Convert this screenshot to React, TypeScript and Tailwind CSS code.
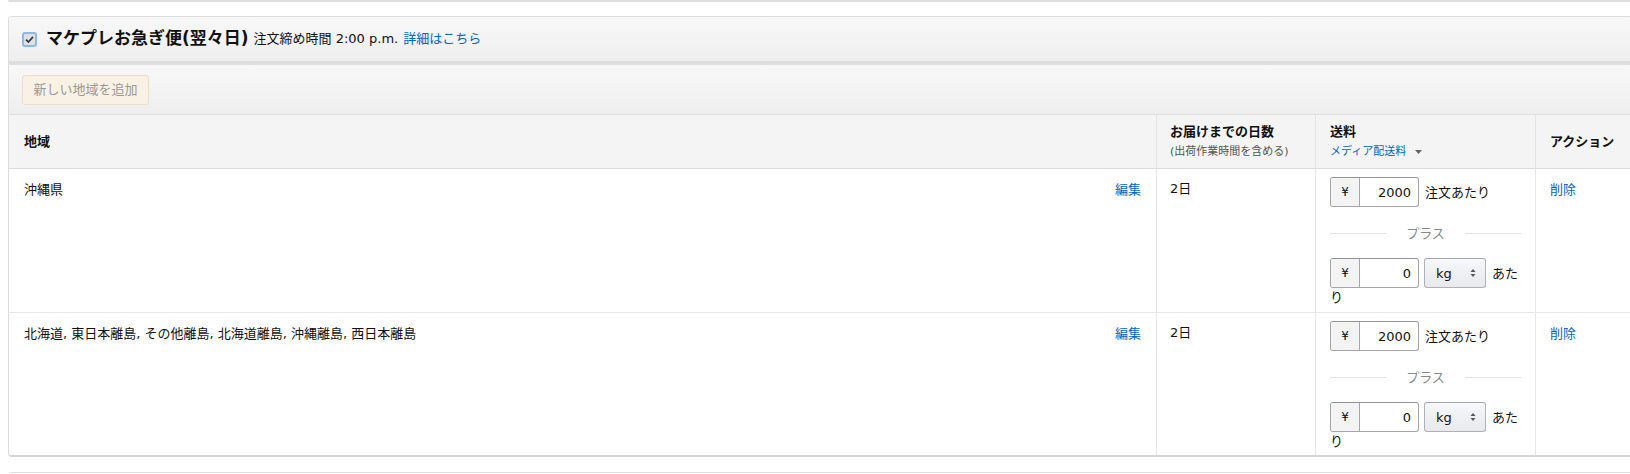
import React from "react";

const FONT = { fontFamily: '"DejaVu Sans", "Noto Sans CJK JP", sans-serif' };

function Checkbox() {
  return (
    <span className="inline-flex items-center justify-center w-[15px] h-[15px] rounded-[3px] border-2 border-[#8cb6ec] bg-[#dfe3e8]">
      <svg width="9" height="9" viewBox="0 0 9 9">
        <path d="M1 4.6 L3.4 7 L8 1.8" fill="none" stroke="#3a3a3a" strokeWidth="1.8" />
      </svg>
    </span>
  );
}

function YenInput({ value }: { value: string }) {
  return (
    <span className="inline-flex align-middle h-[30px] w-[89px] border border-[#a6a6a6] border-t-[#949494] rounded-[3px] overflow-hidden bg-white">
      <span className="w-[29px] flex items-center justify-center bg-[#f3f3f3] border-r border-[#a6a6a6] text-[12px] text-[#111]">¥</span>
      <span className="flex-1 flex items-center justify-end pr-[7px] text-[13px] text-[#111]">{value}</span>
    </span>
  );
}

function UnitSelect() {
  return (
    <span className="inline-flex align-middle items-center justify-between ml-[5px] h-[30px] w-[62px] pl-[11px] pr-[9px] border border-[#adb1b8] border-t-[#a2a6ac] rounded-[3px] bg-gradient-to-b from-[#f7f8fa] to-[#e7e9ec] text-[13px] text-[#111]">
      <span>kg</span>
      <svg width="6" height="10" viewBox="0 0 6 10">
        <path d="M3 1 L5.5 4 L0.5 4 Z" fill="#555" />
        <path d="M3 9 L5.5 6 L0.5 6 Z" fill="#555" />
      </svg>
    </span>
  );
}

function FeeCell() {
  return (
    <div className="w-[191px] text-[13px] leading-[19px] text-[#111]">
      <div>
        <YenInput value="2000" />
        <span className="ml-[6px] align-middle">注文あたり</span>
      </div>
      <div className="flex items-center mt-[17px] mb-[15px] h-[19px]">
        <div className="flex-1 h-px bg-[#e3e3e3]" />
        <span className="px-[20px] text-[#888]">プラス</span>
        <div className="flex-1 h-px bg-[#e3e3e3]" />
      </div>
      <div>
        <YenInput value="0" />
        <UnitSelect />
        <span className="ml-[6px] align-middle">あた</span>
      </div>
      <div>り</div>
    </div>
  );
}

function Row({ region, h }: { region: string; h: string }) {
  return (
    <div className={`grid grid-cols-[1147px_159px_220px_1fr] ${h} border-b border-[#e7e7e7] last:border-b-0 text-[13px] leading-[19px] text-[#111]`}>
      <div className="flex justify-between pl-[15px] pr-[15px] pt-[11px]">
        <span>{region}</span>
        <span className="text-[#0066c0]">編集</span>
      </div>
      <div className="border-l border-[#e7e7e7] pl-[13px] pt-[10px]">2日</div>
      <div className="border-l border-[#e7e7e7] pl-[14px] pt-[8px]">
        <FeeCell />
      </div>
      <div className="border-l border-[#e7e7e7] pl-[14px] pt-[11px] text-[#0066c0]">削除</div>
    </div>
  );
}

export default function App() {
  return (
    <div className="w-[1630px] h-[474px] overflow-hidden bg-white" style={FONT}>
      <div className="ml-[8px] w-[1640px] h-[2px] border-b-2 border-[#dedede] rounded-b-[3px]" />
      <div className="mt-[14px] ml-[8px] w-[1640px] border border-[#dcdcdc] border-b-2 border-b-[#d6d6d6] rounded-[4px] overflow-hidden">
        <div className="h-[44px] flex items-center pl-[13px] bg-gradient-to-b from-[#f8f8f8] to-[#eeeeee]">
          <Checkbox />
          <span className="ml-[9px] text-[17px] font-bold text-[#111]">マケプレお急ぎ便(翌々日)</span>
          <span className="ml-[5px] text-[13px] text-[#111]">注文締め時間 2:00 p.m.</span>
          <span className="ml-[5px] text-[13px] text-[#0066c0]">詳細はこちら</span>
        </div>
        <div className="h-[4px] bg-[#dddddd]" />
        <div className="h-[50px] flex items-center pl-[13px] border-b border-[#dddddd] bg-gradient-to-b from-[#f8f8f8] to-[#eeeeee]">
          <span className="h-[30px] w-[127px] flex items-center justify-center rounded-[3px] border border-[#ebdfc7] bg-[#f8f1e4] text-[13px] text-[#999]">
            新しい地域を追加
          </span>
        </div>
        <div className="grid grid-cols-[1147px_159px_220px_1fr] h-[54px] bg-[#f4f4f4] border-b border-[#dddddd] text-[13px] text-[#111]">
          <div className="flex items-center pl-[15px] font-bold">地域</div>
          <div className="border-l border-[#e3e3e3] pl-[13px] flex flex-col justify-center leading-[20px]">
            <span className="font-bold">お届けまでの日数</span>
            <span className="text-[11px] text-[#555]">(出荷作業時間を含める)</span>
          </div>
          <div className="border-l border-[#e3e3e3] pl-[14px] flex flex-col justify-center leading-[20px]">
            <span className="font-bold">送料</span>
            <span className="flex items-center text-[11px] text-[#0066c0]">
              メディア配送料
              <svg className="ml-[9px]" width="7" height="4" viewBox="0 0 7 4">
                <path d="M0 0 L7 0 L3.5 4 Z" fill="#666" />
              </svg>
            </span>
          </div>
          <div className="border-l border-[#e3e3e3] pl-[14px] flex items-center font-bold">アクション</div>
        </div>
        <Row region="沖縄県" h="h-[144px]" />
        <Row region="北海道, 東日本離島, その他離島, 北海道離島, 沖縄離島, 西日本離島" h="h-[142px]" />
      </div>
      <div className="mt-[15px] ml-[8px] w-[1640px] h-[20px] border border-[#dcdcdc] rounded-t-[4px]" />
    </div>
  );
}
